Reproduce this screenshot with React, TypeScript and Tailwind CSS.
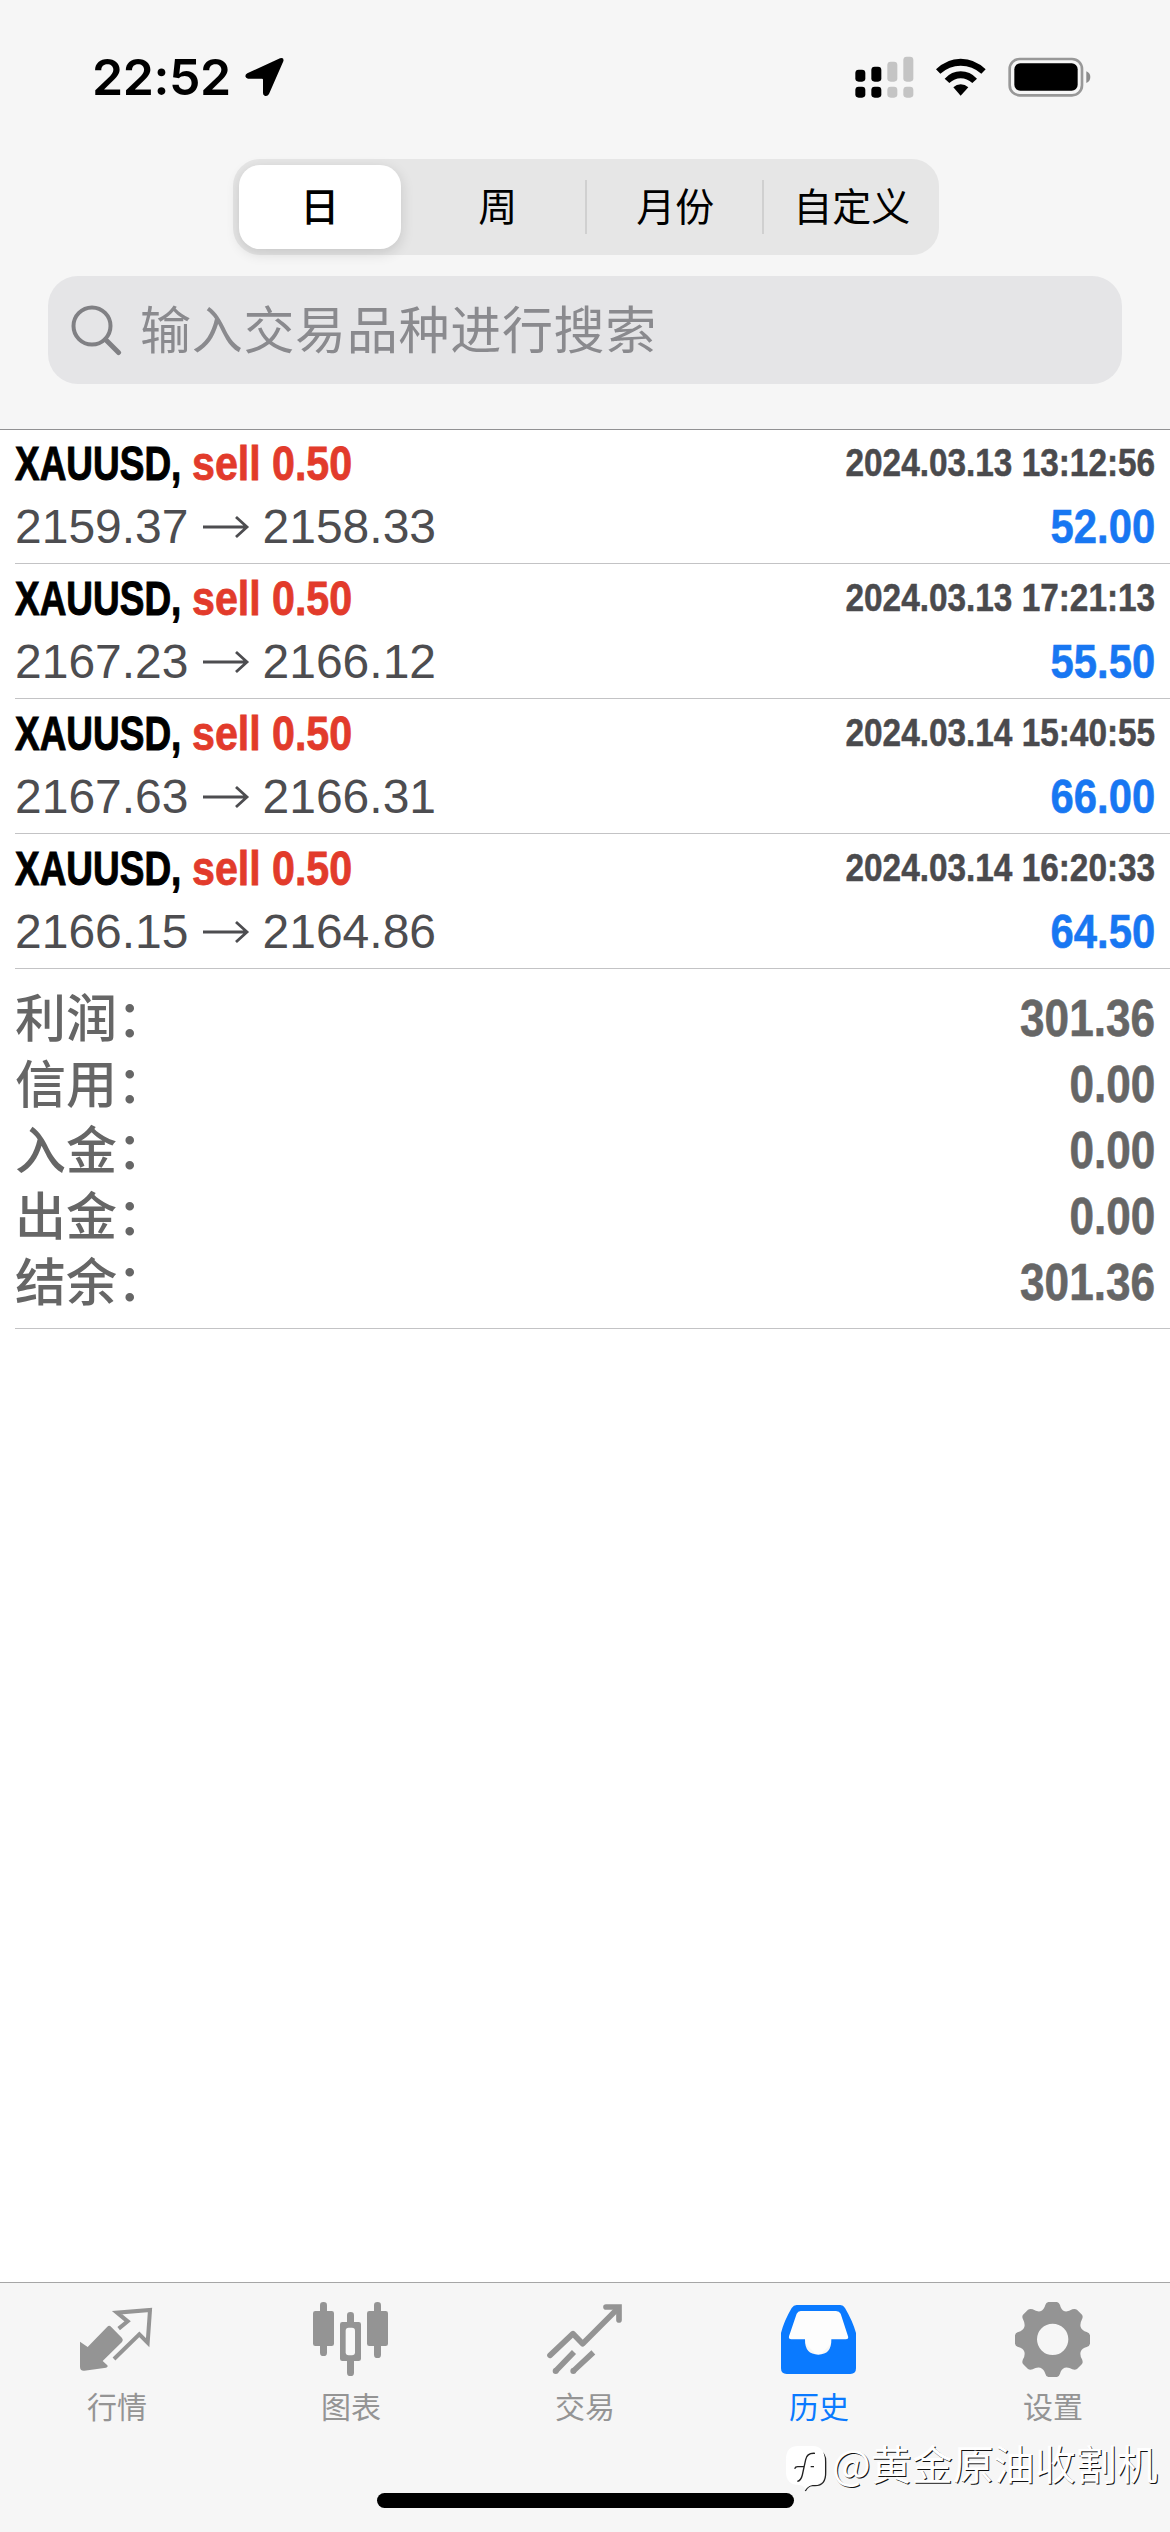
import type { ReactNode } from "react";
import clsx from "clsx";

interface IDeal {
  open: string;
  close: string;
  time: string;
  profit: string;
}

const PERIODS = ["日", "周", "月份", "自定义"];

const DEALS: IDeal[] = [
  { open: "2159.37", close: "2158.33", time: "2024.03.13 13:12:56", profit: "52.00" },
  { open: "2167.23", close: "2166.12", time: "2024.03.13 17:21:13", profit: "55.50" },
  { open: "2167.63", close: "2166.31", time: "2024.03.14 15:40:55", profit: "66.00" },
  { open: "2166.15", close: "2164.86", time: "2024.03.14 16:20:33", profit: "64.50" },
];

const SUMMARY = [
  { label: "利润：", value: "301.36" },
  { label: "信用：", value: "0.00" },
  { label: "入金：", value: "0.00" },
  { label: "出金：", value: "0.00" },
  { label: "结余：", value: "301.36" },
];

function StatusBar() {
  return (
    <div className="flex h-[159px] items-start justify-between pl-[92px] pr-[78px] pt-[47px]">
      <div className="flex items-center">
        <span className="w-[153px] font-['Inter',sans-serif] text-[50px] font-semibold leading-[60px] tracking-[-0.4px]">
          22:52
        </span>
        <svg width="40" height="40" viewBox="555 85 120 120">
          <path
            d="M562 134L660 89Q673 85 670 98L627 196Q622 204 614 201Q609 199 609 193V153Q609 150 606 150H564Q557 149 556 143Q556 137 562 134Z"
            fill="#000"
          />
        </svg>
      </div>
      <svg className="mt-[9px]" width="237" height="42" viewBox="77 79 711 126">
        <g fill="#000">
          <rect x="78" y="120" width="30" height="36" rx="10" />
          <rect x="126" y="111" width="30" height="45" rx="10" />
          <rect x="78" y="171" width="30" height="33" rx="10" />
          <rect x="126" y="171" width="30" height="33" rx="10" />
        </g>
        <g fill="#c4c4c4">
          <rect x="174" y="96" width="30" height="60" rx="10" />
          <rect x="222" y="81" width="30" height="75" rx="10" />
          <rect x="174" y="171" width="30" height="33" rx="10" />
          <rect x="222" y="171" width="30" height="33" rx="10" />
        </g>
        <path
          d="M320 119Q352 87 394 87Q437 87 469 119L456 132Q429 108 394 108Q360 108 333 132Z"
          fill="#000"
        />
        <path
          d="M346 147Q367 125 394 125Q422 125 443 147L429 160Q413 146 394 146Q376 146 360 160Z"
          fill="#000"
        />
        <path d="M372 173Q382 164 394 164Q407 164 417 173L394 198Z" fill="#000" />
        <rect x="541" y="88" width="217" height="109" rx="30" fill="none" stroke="#989898" strokeWidth="8" />
        <rect x="555" y="101" width="190" height="82" rx="18" fill="#000" />
        <path d="M771 125Q783 130 783 142Q783 155 771 160Z" fill="#8c8c8c" />
      </svg>
    </div>
  );
}

function PeriodSwitch() {
  return (
    <div className="ml-[233px] flex h-[96px] w-[706px] rounded-[27px] bg-[#e6e6e6] py-[6px]">
      {PERIODS.map((period, i) => (
        <div key={period} className="flex flex-1 items-center">
          <div
            className={clsx(
              "flex h-[84px] flex-1 items-center justify-center pb-[5px] text-[39px] leading-none",
              i === 0 &&
                "ml-[6px] mr-[9px] rounded-[21px] bg-white font-medium shadow-[0_4px_14px_rgba(0,0,0,0.14)]",
              i > 1 && "pl-[2px]"
            )}
          >
            {period}
          </div>
          {(i === 1 || i === 2) && <div className="-mx-px h-[54px] w-[2px] bg-[#d0d0d0]" />}
        </div>
      ))}
    </div>
  );
}

function SearchField() {
  return (
    <div className="mx-[48px] mt-[21px] flex h-[108px] items-center rounded-[30px] bg-[#e5e5e7] pl-[23px] text-[#8a8a8e]">
      <svg width="51" height="51" viewBox="0 0 51 51" fill="none" stroke="#808084">
        <circle cx="21" cy="21" r="18.5" strokeWidth="4" />
        <path d="M34.5 34.5L47.5 47.5" strokeWidth="5" strokeLinecap="round" />
      </svg>
      <span className="ml-[18px] pb-[5px] text-[51px] leading-none tracking-[0.7px]">输入交易品种进行搜索</span>
    </div>
  );
}

function DealRow({ deal }: { deal: IDeal }) {
  return (
    <div className="ml-[15px] flex h-[135px] flex-col border-b border-[#c3c3c5] pr-[15px] pt-[3px] font-['Liberation_Sans',Arial,sans-serif] text-[48px] leading-[64px]">
      <div className="flex h-[63px] justify-between font-bold">
        <div className="flex whitespace-nowrap">
          <span className="w-[177px] origin-left scale-x-[0.77] [-webkit-text-stroke:1px]">XAUUSD,</span>
          <span className="origin-left scale-x-[0.857] text-[#e23b2b] [-webkit-text-stroke:0.8px]">
            sell 0.50
          </span>
        </div>
        <span className="origin-right scale-x-[0.855] whitespace-nowrap text-[39px] leading-[62px] text-[#4a4a4d] [-webkit-text-stroke:0.5px]">
          {deal.time}
        </span>
      </div>
      <div className="flex h-[63px] justify-between">
        <div className="flex items-center text-[#4d4d50]">
          <span>{deal.open}</span>
          <svg className="mx-[12px]" width="50" height="24" viewBox="0 0 50 24" fill="none" stroke="#4d4d50">
            <path d="M2 12H46M35 2L46 12L35 22" strokeWidth="2.8" />
          </svg>
          <span>{deal.close}</span>
        </div>
        <span className="origin-right scale-x-[0.87] font-bold text-[#1877f2] [-webkit-text-stroke:0.6px]">
          {deal.profit}
        </span>
      </div>
    </div>
  );
}

function TabItem({ label, x, active, children }: { label: string; x: number; active?: boolean; children: ReactNode }) {
  return (
    <div
      className={clsx(
        "flex flex-1 flex-col items-center pt-[17px]",
        active ? "text-[#0a7aff]" : "text-[#949494]"
      )}
    >
      <svg width="80" height="80" viewBox={`${x} 120 240 240`} fill="currentColor">
        {children}
      </svg>
      <span className="mt-[10px] text-[30px] leading-[30px]">{label}</span>
    </div>
  );
}

function TabBar() {
  return (
    <nav className="flex h-[250px] border-t border-[#a6a6a6] bg-[#f6f6f6]">
      <TabItem label="行情" x={111}>
        <path d="M120 245L143 261L202 200Q208 195 213 200L246 234Q251 240 246 246L188 303L202 316Q205 321 198 323L133 332Q120 333 120 320Z" />
        <path
          d="M236 206L263 184L231 158L330 150L323 248L298 223L222 297"
          fill="none"
          stroke="currentColor"
          strokeWidth="12"
        />
      </TabItem>
      <TabItem label="图表" x={813}>
        <rect x="819" y="153" width="63" height="105" rx="7" />
        <rect x="840" y="126" width="21" height="162" rx="10" />
        <rect x="981" y="153" width="63" height="105" rx="7" />
        <rect x="1002" y="126" width="21" height="168" rx="10" />
        <rect x="921" y="156" width="21" height="40" rx="10" />
        <rect x="921" y="290" width="21" height="58" rx="10" />
        <rect x="900" y="186" width="63" height="117" rx="7" />
        <rect x="917" y="203" width="28" height="83" rx="9" fill="#f8f8f8" />
      </TabItem>
      <TabItem label="交易" x={135}>
        <g fill="none" stroke="currentColor" strokeWidth="17">
          <path d="M150 286L219 221L248 251L352 147" strokeLinecap="round" strokeLinejoin="round" />
          <path d="M318 141H357V180" strokeLinecap="round" />
          <path d="M167 333L222 276M220 333L280 277" />
        </g>
        <circle cx="167" cy="333" r="9" />
        <circle cx="220" cy="333" r="9" />
      </TabItem>
      <TabItem label="历史" x={837} active>
        <path
          d="M890 145H1021L1052 225V245H1000L955 290L910 245H858V225Z"
          fill="#fdfdfd"
        />
        <path
          fillRule="evenodd"
          d="M890 135H1021Q1030 135 1035 144Q1058 183 1068 219V325Q1068 342 1051 342H860Q843 342 843 325V219Q852 183 875 144Q881 135 890 135ZM902 153Q894 153 890 161L867 229Q865 238 874 238H915Q914 284 955 284Q995 284 994 238H1037Q1047 238 1044 229L1022 161Q1018 153 1008 153Z"
        />
      </TabItem>
      <TabItem label="设置" x={759}>
        <path
          fillRule="evenodd"
          d="M865 126H891Q897 127 900 135Q903 150 914 154Q925 156 937 148Q945 145 951 149L966 164Q970 170 966 178Q959 191 962 201Q966 212 980 216Q989 219 990 226V251Q989 258 980 261Q966 265 962 275Q959 286 966 298Q970 307 966 312L951 327Q945 331 937 328Q925 320 914 323Q903 327 900 341Q897 350 891 351H865Q858 350 856 341Q852 327 841 323Q830 320 818 328Q810 331 804 327L789 312Q785 307 789 298Q796 286 793 275Q789 265 775 261Q766 258 765 251V226Q766 219 775 216Q789 212 793 201Q796 191 789 178Q785 170 789 164L804 149Q810 145 818 148Q830 156 841 154Q852 150 856 135Q858 127 865 126ZM878 191A47 47 0 1 0 878 285A47 47 0 1 0 878 191Z"
        />
      </TabItem>
    </nav>
  );
}

function Watermark() {
  return (
    <div className="absolute left-[785px] top-[2435px] z-20 flex h-[54px] items-center whitespace-nowrap text-white">
      <svg className="mt-[14px]" width="42" height="48" viewBox="75 558 126 144" fill="#fff">
        <path
          d="M136 696Q145 680 157 680H165Q198 680 197 640V608Q197 582 180 578"
          fill="none"
          stroke="#222"
          strokeWidth="4"
        />
        <path d="M78 600Q78 561 116 561H158Q194 563 194 602V640Q194 676 158 678Q145 680 136 692Q132 680 118 678Q78 678 78 640Z" />
        <path
          d="M165 583Q141 581 137 602L127 648Q123 665 112 667M104 629Q106 623 113 623H131M152 623H162"
          fill="none"
          stroke="#222"
          strokeWidth="4"
        />
      </svg>
      <span className="ml-[5px] text-[41px] leading-[54px] [text-shadow:1px_1px_0_#111]">@黄金原油收割机</span>
    </div>
  );
}

export default function App() {
  return (
    <div className="relative flex h-[2532px] w-[1170px] flex-col overflow-hidden bg-white font-['Noto_Sans_CJK_SC',sans-serif] text-black">
      <header className="h-[430px] shrink-0 border-b border-[#919193] bg-[#f6f6f6]">
        <StatusBar />
        <PeriodSwitch />
        <SearchField />
      </header>
      <main className="-mt-px flex-1">
        {DEALS.map((deal) => (
          <DealRow key={deal.time} deal={deal} />
        ))}
        <div className="ml-[15px] flex h-[360px] flex-col border-b border-[#c3c3c5] pr-[15px] pt-[13px] text-[51px] font-medium text-[#666]">
          {SUMMARY.map(({ label, value }) => (
            <div key={label} className="flex h-[66px] items-center justify-between leading-[66px]">
              <span>{label}</span>
              <span className="origin-right scale-x-[0.865] pt-[8px] font-['Liberation_Sans',Arial,sans-serif] font-bold [-webkit-text-stroke:0.6px]">
                {value}
              </span>
            </div>
          ))}
        </div>
      </main>
      <TabBar />
      <div className="absolute bottom-[24px] left-[377px] h-[15px] w-[417px] rounded-full bg-black" />
      <Watermark />
    </div>
  );
}
